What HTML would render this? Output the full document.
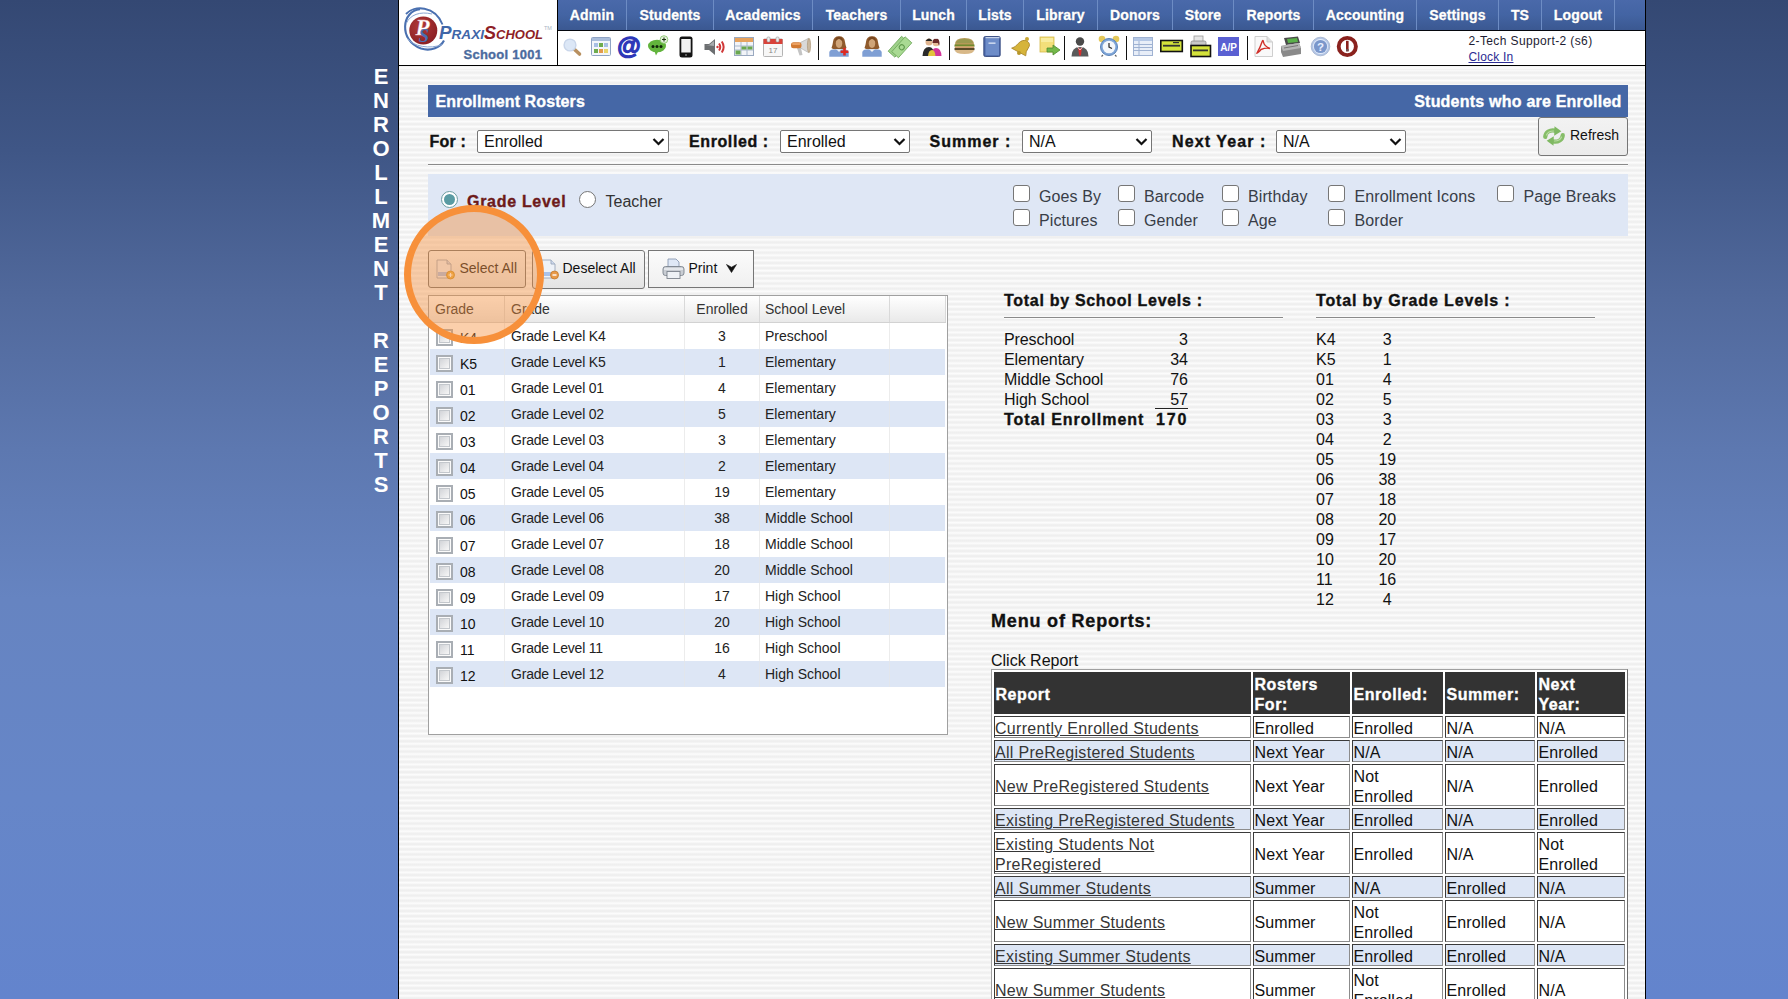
<!DOCTYPE html>
<html><head><meta charset="utf-8"><title>Enrollment Rosters</title>
<style>
html,body{margin:0;padding:0;}
body{width:1788px;height:999px;overflow:hidden;position:relative;font-family:"Liberation Sans",sans-serif;
 background:linear-gradient(to bottom,#344873 0%,#3f5686 15%,#51699c 30%,#5d78b0 45%,#6684c1 60%,#6686c8 80%,#6384cd 100%);}
.a{position:absolute;box-sizing:border-box;}
.t{position:absolute;white-space:nowrap;}
svg{position:absolute;overflow:visible;}
</style></head><body>

<div class="t" style="left:181px;width:400px;text-align:center;top:65px;font-size:22px;line-height:24px;font-weight:bold;color:#ffffff;letter-spacing:0px;">E</div>
<div class="t" style="left:181px;width:400px;text-align:center;top:89px;font-size:22px;line-height:24px;font-weight:bold;color:#ffffff;letter-spacing:0px;">N</div>
<div class="t" style="left:181px;width:400px;text-align:center;top:113px;font-size:22px;line-height:24px;font-weight:bold;color:#ffffff;letter-spacing:0px;">R</div>
<div class="t" style="left:181px;width:400px;text-align:center;top:137px;font-size:22px;line-height:24px;font-weight:bold;color:#ffffff;letter-spacing:0px;">O</div>
<div class="t" style="left:181px;width:400px;text-align:center;top:161px;font-size:22px;line-height:24px;font-weight:bold;color:#ffffff;letter-spacing:0px;">L</div>
<div class="t" style="left:181px;width:400px;text-align:center;top:185px;font-size:22px;line-height:24px;font-weight:bold;color:#ffffff;letter-spacing:0px;">L</div>
<div class="t" style="left:181px;width:400px;text-align:center;top:209px;font-size:22px;line-height:24px;font-weight:bold;color:#ffffff;letter-spacing:0px;">M</div>
<div class="t" style="left:181px;width:400px;text-align:center;top:233px;font-size:22px;line-height:24px;font-weight:bold;color:#ffffff;letter-spacing:0px;">E</div>
<div class="t" style="left:181px;width:400px;text-align:center;top:257px;font-size:22px;line-height:24px;font-weight:bold;color:#ffffff;letter-spacing:0px;">N</div>
<div class="t" style="left:181px;width:400px;text-align:center;top:281px;font-size:22px;line-height:24px;font-weight:bold;color:#ffffff;letter-spacing:0px;">T</div>
<div class="t" style="left:181px;width:400px;text-align:center;top:329px;font-size:22px;line-height:24px;font-weight:bold;color:#ffffff;letter-spacing:0px;">R</div>
<div class="t" style="left:181px;width:400px;text-align:center;top:353px;font-size:22px;line-height:24px;font-weight:bold;color:#ffffff;letter-spacing:0px;">E</div>
<div class="t" style="left:181px;width:400px;text-align:center;top:377px;font-size:22px;line-height:24px;font-weight:bold;color:#ffffff;letter-spacing:0px;">P</div>
<div class="t" style="left:181px;width:400px;text-align:center;top:401px;font-size:22px;line-height:24px;font-weight:bold;color:#ffffff;letter-spacing:0px;">O</div>
<div class="t" style="left:181px;width:400px;text-align:center;top:425px;font-size:22px;line-height:24px;font-weight:bold;color:#ffffff;letter-spacing:0px;">R</div>
<div class="t" style="left:181px;width:400px;text-align:center;top:449px;font-size:22px;line-height:24px;font-weight:bold;color:#ffffff;letter-spacing:0px;">T</div>
<div class="t" style="left:181px;width:400px;text-align:center;top:473px;font-size:22px;line-height:24px;font-weight:bold;color:#ffffff;letter-spacing:0px;">S</div>
<div class="a" style="left:398px;top:0px;width:1248px;height:999px;border-left:1px solid #000;border-right:1px solid #000;background:#fff;"></div>
<div class="a" style="left:399px;top:66px;width:1246px;height:933px;background:repeating-linear-gradient(to bottom,#fdfdfd 0px,#f6f6f6 1.0px,#efefef 2.0px,#efefef 3.14px,#f6f6f6 4.14px,#fdfdfd 5.142857px);background-position:0 4.157px;"></div>
<div class="a" style="left:399px;top:0px;width:1246px;height:65px;background:#fff;"></div>
<div class="a" style="left:399px;top:65px;width:1246px;height:1px;background:#000;"></div>
<div class="a" style="left:557px;top:0px;width:1px;height:65px;background:#000;"></div>
<div class="a" style="left:558px;top:0px;width:1087px;height:30px;background:linear-gradient(to bottom,#4a69aa 0%,#4364a3 50%,#3b5891 100%);"></div>
<div class="a" style="left:558px;top:30px;width:1087px;height:1px;background:#05070d;"></div>
<div class="t" style="left:392.0px;width:400px;text-align:center;top:6px;font-size:14px;line-height:18px;font-weight:bold;color:#ffffff;letter-spacing:0.15px;-webkit-text-stroke:0.35px #ffffff;text-shadow:0 0 1px rgba(0,0,0,.35);">Admin</div>
<div class="a" style="left:626px;top:0px;width:1px;height:30px;background:#6d8cc4;"></div>
<div class="t" style="left:470.0px;width:400px;text-align:center;top:6px;font-size:14px;line-height:18px;font-weight:bold;color:#ffffff;letter-spacing:0.15px;-webkit-text-stroke:0.35px #ffffff;text-shadow:0 0 1px rgba(0,0,0,.35);">Students</div>
<div class="a" style="left:713px;top:0px;width:1px;height:30px;background:#6d8cc4;"></div>
<div class="t" style="left:563.0px;width:400px;text-align:center;top:6px;font-size:14px;line-height:18px;font-weight:bold;color:#ffffff;letter-spacing:0.15px;-webkit-text-stroke:0.35px #ffffff;text-shadow:0 0 1px rgba(0,0,0,.35);">Academics</div>
<div class="a" style="left:812px;top:0px;width:1px;height:30px;background:#6d8cc4;"></div>
<div class="t" style="left:656.5px;width:400px;text-align:center;top:6px;font-size:14px;line-height:18px;font-weight:bold;color:#ffffff;letter-spacing:0.15px;-webkit-text-stroke:0.35px #ffffff;text-shadow:0 0 1px rgba(0,0,0,.35);">Teachers</div>
<div class="a" style="left:900px;top:0px;width:1px;height:30px;background:#6d8cc4;"></div>
<div class="t" style="left:733.5px;width:400px;text-align:center;top:6px;font-size:14px;line-height:18px;font-weight:bold;color:#ffffff;letter-spacing:0.15px;-webkit-text-stroke:0.35px #ffffff;text-shadow:0 0 1px rgba(0,0,0,.35);">Lunch</div>
<div class="a" style="left:966px;top:0px;width:1px;height:30px;background:#6d8cc4;"></div>
<div class="t" style="left:795.0px;width:400px;text-align:center;top:6px;font-size:14px;line-height:18px;font-weight:bold;color:#ffffff;letter-spacing:0.15px;-webkit-text-stroke:0.35px #ffffff;text-shadow:0 0 1px rgba(0,0,0,.35);">Lists</div>
<div class="a" style="left:1023px;top:0px;width:1px;height:30px;background:#6d8cc4;"></div>
<div class="t" style="left:860.5px;width:400px;text-align:center;top:6px;font-size:14px;line-height:18px;font-weight:bold;color:#ffffff;letter-spacing:0.15px;-webkit-text-stroke:0.35px #ffffff;text-shadow:0 0 1px rgba(0,0,0,.35);">Library</div>
<div class="a" style="left:1097px;top:0px;width:1px;height:30px;background:#6d8cc4;"></div>
<div class="t" style="left:935.0px;width:400px;text-align:center;top:6px;font-size:14px;line-height:18px;font-weight:bold;color:#ffffff;letter-spacing:0.15px;-webkit-text-stroke:0.35px #ffffff;text-shadow:0 0 1px rgba(0,0,0,.35);">Donors</div>
<div class="a" style="left:1172px;top:0px;width:1px;height:30px;background:#6d8cc4;"></div>
<div class="t" style="left:1003.0px;width:400px;text-align:center;top:6px;font-size:14px;line-height:18px;font-weight:bold;color:#ffffff;letter-spacing:0.15px;-webkit-text-stroke:0.35px #ffffff;text-shadow:0 0 1px rgba(0,0,0,.35);">Store</div>
<div class="a" style="left:1233px;top:0px;width:1px;height:30px;background:#6d8cc4;"></div>
<div class="t" style="left:1073.5px;width:400px;text-align:center;top:6px;font-size:14px;line-height:18px;font-weight:bold;color:#ffffff;letter-spacing:0.15px;-webkit-text-stroke:0.35px #ffffff;text-shadow:0 0 1px rgba(0,0,0,.35);">Reports</div>
<div class="a" style="left:1313px;top:0px;width:1px;height:30px;background:#6d8cc4;"></div>
<div class="t" style="left:1165.0px;width:400px;text-align:center;top:6px;font-size:14px;line-height:18px;font-weight:bold;color:#ffffff;letter-spacing:0.15px;-webkit-text-stroke:0.35px #ffffff;text-shadow:0 0 1px rgba(0,0,0,.35);">Accounting</div>
<div class="a" style="left:1416px;top:0px;width:1px;height:30px;background:#6d8cc4;"></div>
<div class="t" style="left:1257.5px;width:400px;text-align:center;top:6px;font-size:14px;line-height:18px;font-weight:bold;color:#ffffff;letter-spacing:0.15px;-webkit-text-stroke:0.35px #ffffff;text-shadow:0 0 1px rgba(0,0,0,.35);">Settings</div>
<div class="a" style="left:1498px;top:0px;width:1px;height:30px;background:#6d8cc4;"></div>
<div class="t" style="left:1320.0px;width:400px;text-align:center;top:6px;font-size:14px;line-height:18px;font-weight:bold;color:#ffffff;letter-spacing:0.15px;-webkit-text-stroke:0.35px #ffffff;text-shadow:0 0 1px rgba(0,0,0,.35);">TS</div>
<div class="a" style="left:1541px;top:0px;width:1px;height:30px;background:#6d8cc4;"></div>
<div class="t" style="left:1378.0px;width:400px;text-align:center;top:6px;font-size:14px;line-height:18px;font-weight:bold;color:#ffffff;letter-spacing:0.15px;-webkit-text-stroke:0.35px #ffffff;text-shadow:0 0 1px rgba(0,0,0,.35);">Logout</div>
<div class="a" style="left:1614px;top:0px;width:1px;height:30px;background:#6d8cc4;"></div>
<svg style="left:399px;top:0px" width="158" height="65" viewBox="0 0 158 65">
 <defs><radialGradient id="rg" cx="40%" cy="35%" r="70%"><stop offset="0" stop-color="#b03a3a"/><stop offset="1" stop-color="#8a1e22"/></radialGradient></defs>
 <path d="M21 9.3 C3 10.5, -1 40, 22 48.6 C32 51.5, 41.5 47.5, 45 40.5" fill="none" stroke="#4a70b0" stroke-width="2.1"/>
 <path d="M7 14 C15 5, 36 5.5, 43.5 24.5" fill="none" stroke="#4a70b0" stroke-width="1.9"/>
 <path d="M7.5 23 C11 15, 21 11, 33 14" fill="none" stroke="#8aa6d2" stroke-width="1"/>
 <path d="M8.5 38.5 C14 46.5, 31 49.5, 43.5 44.5" fill="none" stroke="#8aa6d2" stroke-width="1"/>
 <circle cx="24.3" cy="30.5" r="14" fill="url(#rg)"/>
 <text x="16.5" y="35" font-family="Liberation Serif" font-style="italic" font-weight="bold" font-size="23" fill="#ffffff" stroke="#e8b0b0" stroke-width="0.3">P</text>
 <text x="19.5" y="42" font-family="Liberation Serif" font-style="italic" font-weight="bold" font-size="19" fill="#4a6fb4">S</text>
 <text x="40" y="38.5" font-family="Liberation Sans" font-style="italic" font-weight="bold" fill="#3f66a8" textLength="45" lengthAdjust="spacingAndGlyphs"><tspan font-size="17.5">P</tspan><tspan font-size="12.6">RAXI</tspan></text>
 <text x="85" y="38.5" font-family="Liberation Sans" font-style="italic" font-weight="bold" fill="#8e1f26" textLength="59" lengthAdjust="spacingAndGlyphs"><tspan font-size="17.5">S</tspan><tspan font-size="12.6">CHOOL</tspan></text>
 <text x="145" y="29.5" font-family="Liberation Sans" font-size="5.5" fill="#aab4c4">TM</text>
</svg>
<div class="t" style="left:463.5px;top:47px;font-size:13px;line-height:16px;font-weight:bold;color:#4b6b9e;letter-spacing:0.25px;-webkit-text-stroke:0.35px #4b6b9e;">School 1001</div>
<svg style="left:562px;top:37px" width="20" height="19" viewBox="0 0 20 19"><path d="M11.5 11.5 L17.5 17" stroke="#b89060" stroke-width="3.6" stroke-linecap="round"/><circle cx="8" cy="8" r="6.6" fill="#c9d6ea"/><circle cx="8" cy="8" r="5.2" fill="#dce7f6"/></svg>
<svg style="left:591px;top:37px" width="20" height="19" viewBox="0 0 20 19"><rect x="0.5" y="0.5" width="19" height="18" rx="1" fill="#f3f6fb" stroke="#8fa3c4"/><rect x="1" y="1" width="18" height="3" fill="#a9bddb"/><rect x="3" y="6" width="4" height="4" fill="#a7bfe4"/><rect x="8" y="6" width="4" height="4" fill="#6eab4e"/><rect x="13" y="6" width="4" height="4" fill="#a7bfe4"/><rect x="3" y="12" width="4" height="4" fill="#6eab4e"/><rect x="8" y="12" width="4" height="4" fill="#e39a4e"/><rect x="13" y="12" width="4" height="4" fill="#e8d46a"/></svg>
<svg style="left:617px;top:35px" width="24" height="23" viewBox="0 0 24 23"><text x="12" y="18.5" text-anchor="middle" font-family="Liberation Sans" font-weight="bold" font-size="24" fill="#2d37b8" stroke="#2d37b8" stroke-width="1.3">@</text></svg>
<svg style="left:647px;top:35px" width="22" height="22" viewBox="0 0 22 22"><ellipse cx="10" cy="11" rx="9" ry="6.3" fill="#62b43c"/><path d="M7 15 L9 20.5 L12 15Z" fill="#62b43c"/><circle cx="6" cy="11.5" r="1.5" fill="#10240a"/><circle cx="10" cy="11.5" r="1.5" fill="#10240a"/><circle cx="14" cy="11.5" r="1.5" fill="#10240a"/><circle cx="17" cy="4.5" r="3.8" fill="#e4f2dc" stroke="#8cc870" stroke-width="0.9"/><path d="M17 2.5 V6.5 M15 4.5 H19" stroke="#1d3510" stroke-width="1.1"/></svg>
<svg style="left:679px;top:36px" width="14" height="22" viewBox="0 0 14 22"><rect x="0.5" y="0.5" width="13" height="21" rx="2.5" fill="#141414"/><rect x="2.3" y="3" width="9.4" height="13.5" fill="#f2f2f2"/><circle cx="7" cy="19" r="1" fill="#777"/></svg>
<svg style="left:704px;top:38px" width="23" height="18" viewBox="0 0 23 18"><path d="M0.5 6 H5 L11 1 V17 L5 12 H0.5 Z" fill="#6c6f71"/><path d="M1.5 7 H5 L10 3 V8 Z" fill="#a9acae"/><circle cx="13.5" cy="9" r="1.2" fill="#d03838"/><path d="M15 5.5 Q17.5 9 15 12.5" fill="none" stroke="#d03838" stroke-width="2"/><path d="M17.8 3.5 Q21.5 9 17.8 14.5" fill="none" stroke="#d03838" stroke-width="2"/></svg>
<svg style="left:734px;top:37px" width="20" height="19" viewBox="0 0 20 19"><rect x="0.5" y="0.5" width="19" height="18" fill="#f2f4f8" stroke="#9aa9c0"/><rect x="1" y="1" width="18" height="4" fill="#e7a35e"/><path d="M1 9 H19 M1 13 H19 M7 5 V18 M13 5 V18" stroke="#a9b8cc" stroke-width="1"/><rect x="7.5" y="9.5" width="5" height="3" fill="#6aa84f"/><rect x="1.5" y="13.5" width="5" height="4" fill="#6aa84f"/><rect x="13.5" y="9.5" width="5" height="3" fill="#6aa84f"/></svg>
<svg style="left:763px;top:36px" width="20" height="21" viewBox="0 0 20 21"><rect x="0.5" y="3" width="19" height="17.5" rx="1" fill="#f7f7f7" stroke="#b4b4b4"/><rect x="0.5" y="3" width="19" height="5" fill="#d8423a"/><rect x="4" y="1" width="3" height="5" rx="1" fill="#eee" stroke="#999" stroke-width="0.6"/><rect x="13" y="1" width="3" height="5" rx="1" fill="#eee" stroke="#999" stroke-width="0.6"/><text x="10" y="17" text-anchor="middle" font-family="Liberation Sans" font-size="8" fill="#888">17</text></svg>
<svg style="left:790px;top:37px" width="22" height="20" viewBox="0 0 22 20"><path d="M7 11 L9.5 18.5 L12.5 18 L11 11Z" fill="#c4c4c4"/><path d="M10.5 5.5 L18.5 1.3 L18.5 15.6 L10.5 11 Z" fill="#d9d9d9" stroke="#a8a8a8" stroke-width="0.6"/><rect x="1" y="5.3" width="10.5" height="6" rx="2.5" fill="#d27a32"/><rect x="2" y="6" width="8.5" height="2" rx="1" fill="#eba060"/><ellipse cx="19" cy="8.5" rx="1.6" ry="7.2" fill="#c9b8a0" stroke="#a89070" stroke-width="0.6"/></svg>
<div class="a" style="left:818px;top:36px;width:1.3px;height:24px;background:#111;"></div>
<div class="a" style="left:949px;top:36px;width:1.3px;height:24px;background:#111;"></div>
<div class="a" style="left:1064px;top:36px;width:1.3px;height:24px;background:#111;"></div>
<div class="a" style="left:1126px;top:36px;width:1.3px;height:24px;background:#111;"></div>
<div class="a" style="left:1247px;top:36px;width:1.3px;height:24px;background:#111;"></div>
<svg style="left:829px;top:36px" width="20" height="21" viewBox="0 0 20 21"><path d="M10 0.3 Q4.5 0.3 4 6 Q3.5 9.5 2.5 12 Q4.5 13.8 7.5 13 L12.5 13 Q15.5 13.8 17.5 12 Q16.5 9.5 16 6 Q15.5 0.3 10 0.3Z" fill="#8f5a2c"/><ellipse cx="10" cy="7.3" rx="3.2" ry="4.6" fill="#cfa478"/><path d="M10 0.8 Q6 1 6.3 5.5 Q8.5 2.8 10 3 Q11.5 2.8 13.7 5.5 Q14 1 10 0.8Z" fill="#7a4820"/><path d="M0.3 20.8 V16.5 Q0.5 13.6 4 13.4 L16 13.4 Q19.5 13.6 19.7 16.5 V20.8Z" fill="#7f9fd4"/><path d="M7.5 13.4 L10 16 L12.5 13.4Z" fill="#f4f4f4"/><path d="M15.5 11.8 V19.6 M11.6 15.7 H19.4" stroke="#dd2a22" stroke-width="2.6"/></svg>
<svg style="left:862px;top:36px" width="20" height="21" viewBox="0 0 20 21"><path d="M10 0.3 Q4.5 0.3 4 6 Q3.5 9.5 2.5 12 Q4.5 13.8 7.5 13 L12.5 13 Q15.5 13.8 17.5 12 Q16.5 9.5 16 6 Q15.5 0.3 10 0.3Z" fill="#8f5a2c"/><ellipse cx="10" cy="7.3" rx="3.2" ry="4.6" fill="#cfa478"/><path d="M10 0.8 Q6 1 6.3 5.5 Q8.5 2.8 10 3 Q11.5 2.8 13.7 5.5 Q14 1 10 0.8Z" fill="#7a4820"/><path d="M0.3 20.8 V16.5 Q0.5 13.6 4 13.4 L16 13.4 Q19.5 13.6 19.7 16.5 V20.8Z" fill="#7f9fd4"/><path d="M7.5 13.4 L10 16 L12.5 13.4Z" fill="#f4f4f4"/></svg>
<svg style="left:890px;top:37px" width="20" height="19" viewBox="0 0 20 19"><g transform="rotate(-48 10 10)"><rect x="-1" y="4" width="20" height="9" fill="#9ed08a" stroke="#6ea85a" stroke-width="0.8"/><rect x="1" y="7" width="20" height="9" fill="#a9da93" stroke="#6ea85a" stroke-width="0.8"/><circle cx="11" cy="11.5" r="2.5" fill="none" stroke="#5f9a4c"/></g></svg>
<svg style="left:922px;top:37px" width="20" height="19" viewBox="0 0 20 19"><circle cx="7" cy="5" r="3.5" fill="#e0b590"/><path d="M3.5 4 Q7 -1 10.5 4" fill="#222"/><path d="M0.5 19 Q1 10 7 10 Q12 10 12.5 19Z" fill="#2a2a2a"/><circle cx="14" cy="6" r="3.3" fill="#e6bc98"/><path d="M10.5 6 Q11 1 14 2 Q17.5 1 17.5 7 L17 9 L16 6Z" fill="#6a2a2a"/><path d="M9 19 Q9.5 11 14 11 Q19 11 19.5 19Z" fill="#d2359a"/><path d="M6 19 Q6.5 13 10 13 Q13 13 13.5 19Z" fill="#e1c33c"/></svg>
<svg style="left:954px;top:37px" width="21" height="18" viewBox="0 0 21 18"><path d="M1 8 Q0.5 1 10.5 1 Q20.5 1 20 8Z" fill="#b59a58"/><path d="M2 6 Q3 2 10.5 2 Q18 2 19 6Z" fill="#9a9a50"/><rect x="0.5" y="7.5" width="20" height="2.2" fill="#6f8a2e"/><rect x="1" y="9.5" width="19" height="1.3" fill="#e8a060"/><rect x="0.5" y="10.8" width="20" height="2.4" fill="#5a4a28"/><path d="M1 13 H20 Q20 17 10.5 17 Q1 17 1 13Z" fill="#d8b888"/></svg>
<svg style="left:983px;top:36px" width="18" height="21" viewBox="0 0 18 21"><rect x="0.8" y="0.5" width="16.4" height="20" rx="1.5" fill="#4a66a8" stroke="#34497e" stroke-width="0.9"/><rect x="2.5" y="2.3" width="13.5" height="17" fill="#6d8cc8"/><rect x="2.5" y="1" width="14" height="1.3" fill="#c8d4ea"/><rect x="5.5" y="6.5" width="7" height="1.3" fill="#dfe8f7"/></svg>
<svg style="left:1010px;top:36px" width="22" height="21" viewBox="0 0 22 21"><path d="M3 16 Q6 14 7 9 Q9 3 14 3 Q19 4 18 9 Q17 13 19 17 Z" fill="#d6b43a" stroke="#a8862a" stroke-width="0.8" transform="rotate(25 11 11)"/><circle cx="17" cy="3" r="2" fill="#c9a733"/><circle cx="9" cy="17" r="2" fill="#b8962a"/></svg>
<svg style="left:1039px;top:36px" width="22" height="21" viewBox="0 0 22 21"><rect x="1" y="1" width="14" height="15" fill="#f3df7a" stroke="#d4b94a" stroke-width="0.8"/><rect x="2" y="2" width="12" height="4" fill="#f8ec9f"/><path d="M8 12 H14 V9 L21 14 L14 19 V16 H8Z" fill="#74b84a" stroke="#4f8a2e" stroke-width="0.8"/></svg>
<svg style="left:1071px;top:36px" width="18" height="21" viewBox="0 0 18 21"><circle cx="9" cy="5.5" r="4.2" fill="#4a4a4a"/><path d="M0.5 20.5 Q0.5 11 9 11 Q17.5 11 17.5 20.5Z" fill="#5a5a5a"/><path d="M7 11 L9 13 L11 11 L10 19 L9 20 L8 19Z" fill="#d83030"/><path d="M6.5 11 L9 14 L11.5 11" fill="none" stroke="#eee" stroke-width="0.8"/></svg>
<svg style="left:1098px;top:35px" width="22" height="22" viewBox="0 0 22 22"><circle cx="4" cy="4" r="3.3" fill="#e4c85a"/><circle cx="18" cy="4" r="3.3" fill="#e4c85a"/><circle cx="11" cy="12" r="8.5" fill="#7fa6d8" stroke="#5a82b8" stroke-width="1"/><circle cx="11" cy="12" r="6.3" fill="#f4f7fb"/><path d="M11 8 V12 L14 13.5" stroke="#333" stroke-width="1.3" fill="none"/><path d="M5 20 L3.5 21.5 M17 20 L18.5 21.5" stroke="#666" stroke-width="1.2"/></svg>
<svg style="left:1133px;top:37px" width="20" height="19" viewBox="0 0 20 19"><rect x="0.5" y="0.5" width="19" height="18" fill="#e8eef8" stroke="#9fb2d2"/><rect x="1" y="1" width="18" height="3" fill="#b5c8e6"/><path d="M1 7.5 H19 M1 10.5 H19 M1 13.5 H19 M6 4 V18" stroke="#9fb2d2" stroke-width="1"/></svg>
<svg style="left:1160px;top:39px" width="23" height="14" viewBox="0 0 23 14"><rect x="0.8" y="1.5" width="21.5" height="11" fill="#d4e23a" stroke="#111" stroke-width="1.6"/><rect x="3" y="5.8" width="17" height="1.8" fill="#333"/><rect x="13" y="3" width="6" height="1.2" fill="#333"/></svg>
<svg style="left:1190px;top:35px" width="21" height="22" viewBox="0 0 21 22"><rect x="4" y="1" width="9" height="7" fill="#e6e6e6" stroke="#999" stroke-width="0.8"/><rect x="1" y="6" width="15" height="8" rx="1.5" fill="#c8c8c8" stroke="#888" stroke-width="0.8"/><rect x="1" y="10.5" width="19.5" height="11" fill="#d4e23a" stroke="#111" stroke-width="1.6"/><rect x="3" y="14.5" width="15" height="1.8" fill="#333"/></svg>
<svg style="left:1218px;top:37px" width="21" height="19" viewBox="0 0 21 19"><rect x="0" y="0" width="21" height="19" fill="#5a60d2"/><text x="10.5" y="13.5" text-anchor="middle" font-family="Liberation Sans" font-weight="bold" font-size="10" fill="#fff">A/P</text></svg>
<svg style="left:1253px;top:36px" width="21" height="21" viewBox="0 0 21 21"><path d="M2 0.5 H14 L19.5 6 V20.5 H2Z" fill="#f9f9f9" stroke="#c9c9c9" stroke-width="0.9"/><path d="M14 0.5 V6 H19.5" fill="#e0e0e0" stroke="#c9c9c9" stroke-width="0.9"/><path d="M4 17 Q7 12 9 6 Q10 3 10.5 6 Q11 10 17 12.5 Q13 11.5 8 13.5 Q5 17 4 17Z" fill="none" stroke="#d0302a" stroke-width="1.4"/></svg>
<svg style="left:1280px;top:36px" width="22" height="21" viewBox="0 0 22 21"><path d="M4 2 L18 0.5 L20 7 L6 9Z" fill="#4a4a4a"/><path d="M7 3 L17 2 L18 6 L8 7Z" fill="#5ab04a"/><path d="M1 10 L19 7 L21 12 L21 18 L3 21 L1 16Z" fill="#8a8a8a"/><path d="M1 10 L19 7 L21 12 L3 15Z" fill="#b5b5b5"/><path d="M4 12 L18 9.5" stroke="#666" stroke-width="0.8"/></svg>
<svg style="left:1310px;top:36px" width="21" height="21" viewBox="0 0 21 21"><circle cx="10.5" cy="10.5" r="9.3" fill="#b4c6e6" stroke="#9fb0cc" stroke-width="0.8"/><circle cx="10.5" cy="10.5" r="7.4" fill="#e6eefa"/><circle cx="10.5" cy="10.5" r="6.6" fill="#7b97cb"/><text x="10.5" y="15" text-anchor="middle" font-family="Liberation Sans" font-weight="bold" font-size="11.5" fill="#e8f0ff">?</text></svg>
<svg style="left:1336px;top:36px" width="22" height="22" viewBox="0 0 22 22"><circle cx="11.3" cy="10.5" r="8.6" fill="#fff" stroke="#8a221e" stroke-width="3.9"/><rect x="10" y="4.8" width="2.6" height="10.5" fill="#8a221e"/><rect x="10" y="13" width="2.6" height="2.3" fill="#6a5050"/></svg>
<div class="t" style="left:1468.5px;top:34px;font-size:12px;line-height:14px;font-weight:normal;color:#1d1d33;letter-spacing:0.38px;">2-Tech Support-2 (s6)</div>
<div class="t" style="left:1468.5px;top:50px;font-size:12px;line-height:14px;font-weight:normal;color:#2b2b92;letter-spacing:0.2px;text-decoration:underline;">Clock In</div>
<div class="a" style="left:428px;top:85px;width:1200px;height:32px;background:#4567a6;"></div>
<div class="t" style="left:435.5px;top:92px;font-size:16px;line-height:20px;font-weight:bold;color:#ffffff;letter-spacing:0.1px;-webkit-text-stroke:0.35px #ffffff;">Enrollment Rosters</div>
<div class="t" style="left:1221.5px;width:400px;text-align:right;top:92px;font-size:16px;line-height:20px;font-weight:bold;color:#ffffff;letter-spacing:0.22px;-webkit-text-stroke:0.35px #ffffff;">Students who are Enrolled</div>
<div class="t" style="left:429.5px;top:132px;font-size:16px;line-height:20px;font-weight:bold;color:#111;letter-spacing:0.2px;-webkit-text-stroke:0.35px #111;">For :</div>
<div class="a" style="left:477px;top:130px;width:192px;height:23px;background:#fff;border:1px solid #767676;border-radius:2px;"></div>
<div class="t" style="left:484px;top:132px;font-size:16px;line-height:20px;font-weight:normal;color:#111;letter-spacing:0px;">Enrolled</div>
<svg style="left:652px;top:137px" width="13" height="10" viewBox="0 0 13 10"><path d="M1.5 2 L6.5 7 L11.5 2" fill="none" stroke="#111" stroke-width="2.2"/></svg>
<div class="t" style="left:689px;top:132px;font-size:16px;line-height:20px;font-weight:bold;color:#111;letter-spacing:0.6px;-webkit-text-stroke:0.35px #111;">Enrolled :</div>
<div class="a" style="left:780px;top:130px;width:130px;height:23px;background:#fff;border:1px solid #767676;border-radius:2px;"></div>
<div class="t" style="left:787px;top:132px;font-size:16px;line-height:20px;font-weight:normal;color:#111;letter-spacing:0px;">Enrolled</div>
<svg style="left:893px;top:137px" width="13" height="10" viewBox="0 0 13 10"><path d="M1.5 2 L6.5 7 L11.5 2" fill="none" stroke="#111" stroke-width="2.2"/></svg>
<div class="t" style="left:929.5px;top:132px;font-size:16px;line-height:20px;font-weight:bold;color:#111;letter-spacing:1.0px;-webkit-text-stroke:0.35px #111;">Summer :</div>
<div class="a" style="left:1022px;top:130px;width:130px;height:23px;background:#fff;border:1px solid #767676;border-radius:2px;"></div>
<div class="t" style="left:1029px;top:132px;font-size:16px;line-height:20px;font-weight:normal;color:#111;letter-spacing:0px;">N/A</div>
<svg style="left:1135px;top:137px" width="13" height="10" viewBox="0 0 13 10"><path d="M1.5 2 L6.5 7 L11.5 2" fill="none" stroke="#111" stroke-width="2.2"/></svg>
<div class="t" style="left:1172px;top:132px;font-size:16px;line-height:20px;font-weight:bold;color:#111;letter-spacing:1.1px;-webkit-text-stroke:0.35px #111;">Next Year :</div>
<div class="a" style="left:1276px;top:130px;width:130px;height:23px;background:#fff;border:1px solid #767676;border-radius:2px;"></div>
<div class="t" style="left:1283px;top:132px;font-size:16px;line-height:20px;font-weight:normal;color:#111;letter-spacing:0px;">N/A</div>
<svg style="left:1389px;top:137px" width="13" height="10" viewBox="0 0 13 10"><path d="M1.5 2 L6.5 7 L11.5 2" fill="none" stroke="#111" stroke-width="2.2"/></svg>
<div class="a" style="left:1538px;top:117px;width:90px;height:39px;background:linear-gradient(#f2f2f2,#ebebeb);border:1px solid #767676;border-radius:3px;"></div>
<svg style="left:1543px;top:126px" width="22" height="20" viewBox="0 0 22 20">
<path d="M2.2 11 C2.5 6 7 3.6 12 4.6" fill="none" stroke="#86bd68" stroke-width="4.2" stroke-linecap="round"/>
<path d="M11.5 0.3 L18.3 5.2 L11.2 9.8Z" fill="#7fb862"/>
<path d="M19.8 9 C19.5 14 15 16.4 10 15.4" fill="none" stroke="#86bd68" stroke-width="4.2" stroke-linecap="round"/>
<path d="M10.5 19.7 L3.7 14.8 L10.8 10.2Z" fill="#7fb862"/>
<path d="M3.5 9 C4.5 6.5 7 5 10.5 5" fill="none" stroke="#b8dca2" stroke-width="1.2" stroke-linecap="round"/>
<path d="M18.5 11 C17.5 13.5 15 15 11.5 15" fill="none" stroke="#b8dca2" stroke-width="1.2" stroke-linecap="round"/>
</svg>
<div class="t" style="left:1570px;top:127px;font-size:14px;line-height:16px;font-weight:normal;color:#111;letter-spacing:0px;">Refresh</div>
<div class="a" style="left:428px;top:164px;width:1200px;height:1px;background:#8a8a8a;"></div>
<div class="a" style="left:428px;top:165px;width:1200px;height:1px;background:#fafafa;"></div>
<div class="a" style="left:428px;top:174px;width:1200px;height:62px;background:#dfe7f5;"></div>
<div class="a" style="left:441px;top:191px;width:17px;height:17px;border-radius:50%;border:1px solid #6c9ca0;background:#fff;"></div>
<div class="a" style="left:444px;top:194px;width:11px;height:11px;border-radius:50%;background:#5a9ba3;"></div>
<div class="t" style="left:467px;top:192px;font-size:16px;line-height:20px;font-weight:bold;color:#6d1a1a;letter-spacing:0.7px;-webkit-text-stroke:0.35px #6d1a1a;">Grade Level</div>
<div class="a" style="left:579px;top:191px;width:17px;height:17px;border-radius:50%;border:1px solid #767676;background:#fff;"></div>
<div class="t" style="left:605.5px;top:192px;font-size:16px;line-height:20px;font-weight:normal;color:#333;letter-spacing:0px;">Teacher</div>
<div class="a" style="left:1013px;top:185px;width:17px;height:17px;border-radius:3px;border:1px solid #767676;background:#fff;"></div>
<div class="t" style="left:1039px;top:187px;font-size:16px;line-height:20px;font-weight:normal;color:#383d47;letter-spacing:0.1px;">Goes By</div>
<div class="a" style="left:1013px;top:209px;width:17px;height:17px;border-radius:3px;border:1px solid #767676;background:#fff;"></div>
<div class="t" style="left:1039px;top:211px;font-size:16px;line-height:20px;font-weight:normal;color:#383d47;letter-spacing:0.1px;">Pictures</div>
<div class="a" style="left:1118px;top:185px;width:17px;height:17px;border-radius:3px;border:1px solid #767676;background:#fff;"></div>
<div class="t" style="left:1144px;top:187px;font-size:16px;line-height:20px;font-weight:normal;color:#383d47;letter-spacing:0.1px;">Barcode</div>
<div class="a" style="left:1118px;top:209px;width:17px;height:17px;border-radius:3px;border:1px solid #767676;background:#fff;"></div>
<div class="t" style="left:1144px;top:211px;font-size:16px;line-height:20px;font-weight:normal;color:#383d47;letter-spacing:0.1px;">Gender</div>
<div class="a" style="left:1222px;top:185px;width:17px;height:17px;border-radius:3px;border:1px solid #767676;background:#fff;"></div>
<div class="t" style="left:1248px;top:187px;font-size:16px;line-height:20px;font-weight:normal;color:#383d47;letter-spacing:0.1px;">Birthday</div>
<div class="a" style="left:1222px;top:209px;width:17px;height:17px;border-radius:3px;border:1px solid #767676;background:#fff;"></div>
<div class="t" style="left:1248px;top:211px;font-size:16px;line-height:20px;font-weight:normal;color:#383d47;letter-spacing:0.1px;">Age</div>
<div class="a" style="left:1328px;top:185px;width:17px;height:17px;border-radius:3px;border:1px solid #767676;background:#fff;"></div>
<div class="t" style="left:1354.5px;top:187px;font-size:16px;line-height:20px;font-weight:normal;color:#383d47;letter-spacing:0.1px;">Enrollment Icons</div>
<div class="a" style="left:1328px;top:209px;width:17px;height:17px;border-radius:3px;border:1px solid #767676;background:#fff;"></div>
<div class="t" style="left:1354.5px;top:211px;font-size:16px;line-height:20px;font-weight:normal;color:#383d47;letter-spacing:0.1px;">Border</div>
<div class="a" style="left:1497px;top:185px;width:17px;height:17px;border-radius:3px;border:1px solid #767676;background:#fff;"></div>
<div class="t" style="left:1523.5px;top:187px;font-size:16px;line-height:20px;font-weight:normal;color:#383d47;letter-spacing:0.1px;">Page Breaks</div>
<div class="a" style="left:428px;top:250px;width:98px;height:38px;background:linear-gradient(#f6f6f6,#e4e4e4);border:1px solid #767676;border-radius:3px;"></div>
<svg style="left:436px;top:259px" width="20" height="21" viewBox="0 0 20 21"><path d="M1 1 H11 L15 5 V19 H1Z" fill="#eef2f8" stroke="#9aa7bb" stroke-width="0.9"/><path d="M11 1 V5 H15" fill="#d0dbee" stroke="#9aa7bb" stroke-width="0.9"/><rect x="2" y="13" width="12" height="4" fill="#a9c2ea"/><circle cx="14.5" cy="16" r="4" fill="#e8b24a" stroke="#c48a2a" stroke-width="0.8"/><path d="M14.5 14 V18 M12.5 16 H16.5" stroke="#fff" stroke-width="1.2"/></svg>
<div class="t" style="left:459.5px;top:260px;font-size:14px;line-height:16px;font-weight:normal;color:#222;letter-spacing:0px;">Select All</div>
<div class="a" style="left:532px;top:250px;width:113px;height:39px;background:linear-gradient(#f6f6f6,#e4e4e4);border:1px solid #767676;border-radius:3px;"></div>
<svg style="left:540px;top:259px" width="20" height="21" viewBox="0 0 20 21"><path d="M1 1 H11 L15 5 V19 H1Z" fill="#eef2f8" stroke="#9aa7bb" stroke-width="0.9"/><path d="M11 1 V5 H15" fill="#d0dbee" stroke="#9aa7bb" stroke-width="0.9"/><rect x="2" y="13" width="12" height="4" fill="#a9c2ea"/><circle cx="14.5" cy="16" r="4" fill="#e89a4a" stroke="#c47a2a" stroke-width="0.8"/><path d="M12.5 16 H16.5" stroke="#fff" stroke-width="1.4"/></svg>
<div class="t" style="left:562.5px;top:260px;font-size:14px;line-height:16px;font-weight:normal;color:#111;letter-spacing:0px;">Deselect All</div>
<div class="a" style="left:648px;top:250px;width:106px;height:38px;background:linear-gradient(#fbfbfb,#f0f0f0);border:1px solid #767676;"></div>
<svg style="left:662px;top:258px" width="23" height="22" viewBox="0 0 23 22">
<path d="M6 1 H14 L17 4 V9 H6Z" fill="#dfe8f6" stroke="#8b9ab2" stroke-width="0.9"/>
<rect x="1" y="8.5" width="21" height="9" rx="2.5" fill="#c9cdd3" stroke="#7c838d" stroke-width="0.9"/>
<rect x="5" y="13.5" width="13" height="7" fill="#eef1f5" stroke="#7c838d" stroke-width="0.9"/>
<rect x="2" y="10" width="19" height="2" fill="#e4e7eb"/>
</svg>
<div class="t" style="left:688.5px;top:260px;font-size:14px;line-height:16px;font-weight:normal;color:#111;letter-spacing:0px;">Print</div>
<svg style="left:726px;top:263px" width="11" height="10" viewBox="0 0 11 10"><path d="M0.5 1.5 L5.5 9.5 L10.5 1.5 L5.5 4.2Z" fill="#111" stroke="#111" stroke-width="0.6" stroke-linejoin="round"/></svg>
<div class="a" style="left:428px;top:295px;width:520px;height:440px;background:#fff;border:1px solid #a0a0a0;"></div>
<div class="a" style="left:429px;top:296px;width:517px;height:27px;background:linear-gradient(#ffffff,#e9e9e9);border-bottom:1px solid #d2d2d2;"></div>
<div class="a" style="left:504px;top:296px;width:1px;height:26px;background:#d9d9d9;"></div>
<div class="a" style="left:684px;top:296px;width:1px;height:26px;background:#d9d9d9;"></div>
<div class="a" style="left:759px;top:296px;width:1px;height:26px;background:#d9d9d9;"></div>
<div class="a" style="left:889px;top:296px;width:1px;height:26px;background:#d9d9d9;"></div>
<div class="a" style="left:945px;top:296px;width:1px;height:26px;background:#d9d9d9;"></div>
<div class="t" style="left:435px;top:301px;font-size:14px;line-height:16px;font-weight:normal;color:#333;letter-spacing:0px;">Grade</div>
<div class="t" style="left:511px;top:301px;font-size:14px;line-height:16px;font-weight:normal;color:#333;letter-spacing:0px;">Grade</div>
<div class="t" style="left:522px;width:400px;text-align:center;top:301px;font-size:14px;line-height:16px;font-weight:normal;color:#333;letter-spacing:0px;">Enrolled</div>
<div class="t" style="left:765px;top:301px;font-size:14px;line-height:16px;font-weight:normal;color:#333;letter-spacing:0px;">School Level</div>
<div class="a" style="left:430px;top:323px;width:515px;height:26px;background:#ffffff;"></div>
<div class="a" style="left:504px;top:323px;width:1px;height:26px;background:#ececec;"></div>
<div class="a" style="left:684px;top:323px;width:1px;height:26px;background:#ececec;"></div>
<div class="a" style="left:759px;top:323px;width:1px;height:26px;background:#ececec;"></div>
<div class="a" style="left:889px;top:323px;width:1px;height:26px;background:#ececec;"></div>
<div class="a" style="left:436px;top:329px;width:17px;height:17px;border:2px solid #a9aeb4;background:#fbfbfb;"><div class="a" style="left:1px;top:1px;width:11px;height:11px;border:1px solid #c3c7cc;background:linear-gradient(135deg,#d2d4d8,#f7f7f7);"></div></div>
<div class="t" style="left:460px;top:330px;font-size:14px;line-height:16px;font-weight:normal;color:#111;letter-spacing:0px;">K4</div>
<div class="t" style="left:511px;top:328px;font-size:14px;line-height:16px;font-weight:normal;color:#222;letter-spacing:-0.2px;">Grade Level K4</div>
<div class="t" style="left:522px;width:400px;text-align:center;top:328px;font-size:14px;line-height:16px;font-weight:normal;color:#222;letter-spacing:0px;">3</div>
<div class="t" style="left:765px;top:328px;font-size:14px;line-height:16px;font-weight:normal;color:#222;letter-spacing:0px;">Preschool</div>
<div class="a" style="left:430px;top:349px;width:515px;height:26px;background:#dde6f5;"></div>
<div class="a" style="left:504px;top:349px;width:1px;height:26px;background:#e2e6ec;"></div>
<div class="a" style="left:684px;top:349px;width:1px;height:26px;background:#e2e6ec;"></div>
<div class="a" style="left:759px;top:349px;width:1px;height:26px;background:#e2e6ec;"></div>
<div class="a" style="left:889px;top:349px;width:1px;height:26px;background:#e2e6ec;"></div>
<div class="a" style="left:436px;top:355px;width:17px;height:17px;border:2px solid #a9aeb4;background:#fbfbfb;"><div class="a" style="left:1px;top:1px;width:11px;height:11px;border:1px solid #c3c7cc;background:linear-gradient(135deg,#d2d4d8,#f7f7f7);"></div></div>
<div class="t" style="left:460px;top:356px;font-size:14px;line-height:16px;font-weight:normal;color:#111;letter-spacing:0px;">K5</div>
<div class="t" style="left:511px;top:354px;font-size:14px;line-height:16px;font-weight:normal;color:#222;letter-spacing:-0.2px;">Grade Level K5</div>
<div class="t" style="left:522px;width:400px;text-align:center;top:354px;font-size:14px;line-height:16px;font-weight:normal;color:#222;letter-spacing:0px;">1</div>
<div class="t" style="left:765px;top:354px;font-size:14px;line-height:16px;font-weight:normal;color:#222;letter-spacing:0px;">Elementary</div>
<div class="a" style="left:430px;top:375px;width:515px;height:26px;background:#ffffff;"></div>
<div class="a" style="left:504px;top:375px;width:1px;height:26px;background:#ececec;"></div>
<div class="a" style="left:684px;top:375px;width:1px;height:26px;background:#ececec;"></div>
<div class="a" style="left:759px;top:375px;width:1px;height:26px;background:#ececec;"></div>
<div class="a" style="left:889px;top:375px;width:1px;height:26px;background:#ececec;"></div>
<div class="a" style="left:436px;top:381px;width:17px;height:17px;border:2px solid #a9aeb4;background:#fbfbfb;"><div class="a" style="left:1px;top:1px;width:11px;height:11px;border:1px solid #c3c7cc;background:linear-gradient(135deg,#d2d4d8,#f7f7f7);"></div></div>
<div class="t" style="left:460px;top:382px;font-size:14px;line-height:16px;font-weight:normal;color:#111;letter-spacing:0px;">01</div>
<div class="t" style="left:511px;top:380px;font-size:14px;line-height:16px;font-weight:normal;color:#222;letter-spacing:-0.2px;">Grade Level 01</div>
<div class="t" style="left:522px;width:400px;text-align:center;top:380px;font-size:14px;line-height:16px;font-weight:normal;color:#222;letter-spacing:0px;">4</div>
<div class="t" style="left:765px;top:380px;font-size:14px;line-height:16px;font-weight:normal;color:#222;letter-spacing:0px;">Elementary</div>
<div class="a" style="left:430px;top:401px;width:515px;height:26px;background:#dde6f5;"></div>
<div class="a" style="left:504px;top:401px;width:1px;height:26px;background:#e2e6ec;"></div>
<div class="a" style="left:684px;top:401px;width:1px;height:26px;background:#e2e6ec;"></div>
<div class="a" style="left:759px;top:401px;width:1px;height:26px;background:#e2e6ec;"></div>
<div class="a" style="left:889px;top:401px;width:1px;height:26px;background:#e2e6ec;"></div>
<div class="a" style="left:436px;top:407px;width:17px;height:17px;border:2px solid #a9aeb4;background:#fbfbfb;"><div class="a" style="left:1px;top:1px;width:11px;height:11px;border:1px solid #c3c7cc;background:linear-gradient(135deg,#d2d4d8,#f7f7f7);"></div></div>
<div class="t" style="left:460px;top:408px;font-size:14px;line-height:16px;font-weight:normal;color:#111;letter-spacing:0px;">02</div>
<div class="t" style="left:511px;top:406px;font-size:14px;line-height:16px;font-weight:normal;color:#222;letter-spacing:-0.2px;">Grade Level 02</div>
<div class="t" style="left:522px;width:400px;text-align:center;top:406px;font-size:14px;line-height:16px;font-weight:normal;color:#222;letter-spacing:0px;">5</div>
<div class="t" style="left:765px;top:406px;font-size:14px;line-height:16px;font-weight:normal;color:#222;letter-spacing:0px;">Elementary</div>
<div class="a" style="left:430px;top:427px;width:515px;height:26px;background:#ffffff;"></div>
<div class="a" style="left:504px;top:427px;width:1px;height:26px;background:#ececec;"></div>
<div class="a" style="left:684px;top:427px;width:1px;height:26px;background:#ececec;"></div>
<div class="a" style="left:759px;top:427px;width:1px;height:26px;background:#ececec;"></div>
<div class="a" style="left:889px;top:427px;width:1px;height:26px;background:#ececec;"></div>
<div class="a" style="left:436px;top:433px;width:17px;height:17px;border:2px solid #a9aeb4;background:#fbfbfb;"><div class="a" style="left:1px;top:1px;width:11px;height:11px;border:1px solid #c3c7cc;background:linear-gradient(135deg,#d2d4d8,#f7f7f7);"></div></div>
<div class="t" style="left:460px;top:434px;font-size:14px;line-height:16px;font-weight:normal;color:#111;letter-spacing:0px;">03</div>
<div class="t" style="left:511px;top:432px;font-size:14px;line-height:16px;font-weight:normal;color:#222;letter-spacing:-0.2px;">Grade Level 03</div>
<div class="t" style="left:522px;width:400px;text-align:center;top:432px;font-size:14px;line-height:16px;font-weight:normal;color:#222;letter-spacing:0px;">3</div>
<div class="t" style="left:765px;top:432px;font-size:14px;line-height:16px;font-weight:normal;color:#222;letter-spacing:0px;">Elementary</div>
<div class="a" style="left:430px;top:453px;width:515px;height:26px;background:#dde6f5;"></div>
<div class="a" style="left:504px;top:453px;width:1px;height:26px;background:#e2e6ec;"></div>
<div class="a" style="left:684px;top:453px;width:1px;height:26px;background:#e2e6ec;"></div>
<div class="a" style="left:759px;top:453px;width:1px;height:26px;background:#e2e6ec;"></div>
<div class="a" style="left:889px;top:453px;width:1px;height:26px;background:#e2e6ec;"></div>
<div class="a" style="left:436px;top:459px;width:17px;height:17px;border:2px solid #a9aeb4;background:#fbfbfb;"><div class="a" style="left:1px;top:1px;width:11px;height:11px;border:1px solid #c3c7cc;background:linear-gradient(135deg,#d2d4d8,#f7f7f7);"></div></div>
<div class="t" style="left:460px;top:460px;font-size:14px;line-height:16px;font-weight:normal;color:#111;letter-spacing:0px;">04</div>
<div class="t" style="left:511px;top:458px;font-size:14px;line-height:16px;font-weight:normal;color:#222;letter-spacing:-0.2px;">Grade Level 04</div>
<div class="t" style="left:522px;width:400px;text-align:center;top:458px;font-size:14px;line-height:16px;font-weight:normal;color:#222;letter-spacing:0px;">2</div>
<div class="t" style="left:765px;top:458px;font-size:14px;line-height:16px;font-weight:normal;color:#222;letter-spacing:0px;">Elementary</div>
<div class="a" style="left:430px;top:479px;width:515px;height:26px;background:#ffffff;"></div>
<div class="a" style="left:504px;top:479px;width:1px;height:26px;background:#ececec;"></div>
<div class="a" style="left:684px;top:479px;width:1px;height:26px;background:#ececec;"></div>
<div class="a" style="left:759px;top:479px;width:1px;height:26px;background:#ececec;"></div>
<div class="a" style="left:889px;top:479px;width:1px;height:26px;background:#ececec;"></div>
<div class="a" style="left:436px;top:485px;width:17px;height:17px;border:2px solid #a9aeb4;background:#fbfbfb;"><div class="a" style="left:1px;top:1px;width:11px;height:11px;border:1px solid #c3c7cc;background:linear-gradient(135deg,#d2d4d8,#f7f7f7);"></div></div>
<div class="t" style="left:460px;top:486px;font-size:14px;line-height:16px;font-weight:normal;color:#111;letter-spacing:0px;">05</div>
<div class="t" style="left:511px;top:484px;font-size:14px;line-height:16px;font-weight:normal;color:#222;letter-spacing:-0.2px;">Grade Level 05</div>
<div class="t" style="left:522px;width:400px;text-align:center;top:484px;font-size:14px;line-height:16px;font-weight:normal;color:#222;letter-spacing:0px;">19</div>
<div class="t" style="left:765px;top:484px;font-size:14px;line-height:16px;font-weight:normal;color:#222;letter-spacing:0px;">Elementary</div>
<div class="a" style="left:430px;top:505px;width:515px;height:26px;background:#dde6f5;"></div>
<div class="a" style="left:504px;top:505px;width:1px;height:26px;background:#e2e6ec;"></div>
<div class="a" style="left:684px;top:505px;width:1px;height:26px;background:#e2e6ec;"></div>
<div class="a" style="left:759px;top:505px;width:1px;height:26px;background:#e2e6ec;"></div>
<div class="a" style="left:889px;top:505px;width:1px;height:26px;background:#e2e6ec;"></div>
<div class="a" style="left:436px;top:511px;width:17px;height:17px;border:2px solid #a9aeb4;background:#fbfbfb;"><div class="a" style="left:1px;top:1px;width:11px;height:11px;border:1px solid #c3c7cc;background:linear-gradient(135deg,#d2d4d8,#f7f7f7);"></div></div>
<div class="t" style="left:460px;top:512px;font-size:14px;line-height:16px;font-weight:normal;color:#111;letter-spacing:0px;">06</div>
<div class="t" style="left:511px;top:510px;font-size:14px;line-height:16px;font-weight:normal;color:#222;letter-spacing:-0.2px;">Grade Level 06</div>
<div class="t" style="left:522px;width:400px;text-align:center;top:510px;font-size:14px;line-height:16px;font-weight:normal;color:#222;letter-spacing:0px;">38</div>
<div class="t" style="left:765px;top:510px;font-size:14px;line-height:16px;font-weight:normal;color:#222;letter-spacing:0px;">Middle School</div>
<div class="a" style="left:430px;top:531px;width:515px;height:26px;background:#ffffff;"></div>
<div class="a" style="left:504px;top:531px;width:1px;height:26px;background:#ececec;"></div>
<div class="a" style="left:684px;top:531px;width:1px;height:26px;background:#ececec;"></div>
<div class="a" style="left:759px;top:531px;width:1px;height:26px;background:#ececec;"></div>
<div class="a" style="left:889px;top:531px;width:1px;height:26px;background:#ececec;"></div>
<div class="a" style="left:436px;top:537px;width:17px;height:17px;border:2px solid #a9aeb4;background:#fbfbfb;"><div class="a" style="left:1px;top:1px;width:11px;height:11px;border:1px solid #c3c7cc;background:linear-gradient(135deg,#d2d4d8,#f7f7f7);"></div></div>
<div class="t" style="left:460px;top:538px;font-size:14px;line-height:16px;font-weight:normal;color:#111;letter-spacing:0px;">07</div>
<div class="t" style="left:511px;top:536px;font-size:14px;line-height:16px;font-weight:normal;color:#222;letter-spacing:-0.2px;">Grade Level 07</div>
<div class="t" style="left:522px;width:400px;text-align:center;top:536px;font-size:14px;line-height:16px;font-weight:normal;color:#222;letter-spacing:0px;">18</div>
<div class="t" style="left:765px;top:536px;font-size:14px;line-height:16px;font-weight:normal;color:#222;letter-spacing:0px;">Middle School</div>
<div class="a" style="left:430px;top:557px;width:515px;height:26px;background:#dde6f5;"></div>
<div class="a" style="left:504px;top:557px;width:1px;height:26px;background:#e2e6ec;"></div>
<div class="a" style="left:684px;top:557px;width:1px;height:26px;background:#e2e6ec;"></div>
<div class="a" style="left:759px;top:557px;width:1px;height:26px;background:#e2e6ec;"></div>
<div class="a" style="left:889px;top:557px;width:1px;height:26px;background:#e2e6ec;"></div>
<div class="a" style="left:436px;top:563px;width:17px;height:17px;border:2px solid #a9aeb4;background:#fbfbfb;"><div class="a" style="left:1px;top:1px;width:11px;height:11px;border:1px solid #c3c7cc;background:linear-gradient(135deg,#d2d4d8,#f7f7f7);"></div></div>
<div class="t" style="left:460px;top:564px;font-size:14px;line-height:16px;font-weight:normal;color:#111;letter-spacing:0px;">08</div>
<div class="t" style="left:511px;top:562px;font-size:14px;line-height:16px;font-weight:normal;color:#222;letter-spacing:-0.2px;">Grade Level 08</div>
<div class="t" style="left:522px;width:400px;text-align:center;top:562px;font-size:14px;line-height:16px;font-weight:normal;color:#222;letter-spacing:0px;">20</div>
<div class="t" style="left:765px;top:562px;font-size:14px;line-height:16px;font-weight:normal;color:#222;letter-spacing:0px;">Middle School</div>
<div class="a" style="left:430px;top:583px;width:515px;height:26px;background:#ffffff;"></div>
<div class="a" style="left:504px;top:583px;width:1px;height:26px;background:#ececec;"></div>
<div class="a" style="left:684px;top:583px;width:1px;height:26px;background:#ececec;"></div>
<div class="a" style="left:759px;top:583px;width:1px;height:26px;background:#ececec;"></div>
<div class="a" style="left:889px;top:583px;width:1px;height:26px;background:#ececec;"></div>
<div class="a" style="left:436px;top:589px;width:17px;height:17px;border:2px solid #a9aeb4;background:#fbfbfb;"><div class="a" style="left:1px;top:1px;width:11px;height:11px;border:1px solid #c3c7cc;background:linear-gradient(135deg,#d2d4d8,#f7f7f7);"></div></div>
<div class="t" style="left:460px;top:590px;font-size:14px;line-height:16px;font-weight:normal;color:#111;letter-spacing:0px;">09</div>
<div class="t" style="left:511px;top:588px;font-size:14px;line-height:16px;font-weight:normal;color:#222;letter-spacing:-0.2px;">Grade Level 09</div>
<div class="t" style="left:522px;width:400px;text-align:center;top:588px;font-size:14px;line-height:16px;font-weight:normal;color:#222;letter-spacing:0px;">17</div>
<div class="t" style="left:765px;top:588px;font-size:14px;line-height:16px;font-weight:normal;color:#222;letter-spacing:0px;">High School</div>
<div class="a" style="left:430px;top:609px;width:515px;height:26px;background:#dde6f5;"></div>
<div class="a" style="left:504px;top:609px;width:1px;height:26px;background:#e2e6ec;"></div>
<div class="a" style="left:684px;top:609px;width:1px;height:26px;background:#e2e6ec;"></div>
<div class="a" style="left:759px;top:609px;width:1px;height:26px;background:#e2e6ec;"></div>
<div class="a" style="left:889px;top:609px;width:1px;height:26px;background:#e2e6ec;"></div>
<div class="a" style="left:436px;top:615px;width:17px;height:17px;border:2px solid #a9aeb4;background:#fbfbfb;"><div class="a" style="left:1px;top:1px;width:11px;height:11px;border:1px solid #c3c7cc;background:linear-gradient(135deg,#d2d4d8,#f7f7f7);"></div></div>
<div class="t" style="left:460px;top:616px;font-size:14px;line-height:16px;font-weight:normal;color:#111;letter-spacing:0px;">10</div>
<div class="t" style="left:511px;top:614px;font-size:14px;line-height:16px;font-weight:normal;color:#222;letter-spacing:-0.2px;">Grade Level 10</div>
<div class="t" style="left:522px;width:400px;text-align:center;top:614px;font-size:14px;line-height:16px;font-weight:normal;color:#222;letter-spacing:0px;">20</div>
<div class="t" style="left:765px;top:614px;font-size:14px;line-height:16px;font-weight:normal;color:#222;letter-spacing:0px;">High School</div>
<div class="a" style="left:430px;top:635px;width:515px;height:26px;background:#ffffff;"></div>
<div class="a" style="left:504px;top:635px;width:1px;height:26px;background:#ececec;"></div>
<div class="a" style="left:684px;top:635px;width:1px;height:26px;background:#ececec;"></div>
<div class="a" style="left:759px;top:635px;width:1px;height:26px;background:#ececec;"></div>
<div class="a" style="left:889px;top:635px;width:1px;height:26px;background:#ececec;"></div>
<div class="a" style="left:436px;top:641px;width:17px;height:17px;border:2px solid #a9aeb4;background:#fbfbfb;"><div class="a" style="left:1px;top:1px;width:11px;height:11px;border:1px solid #c3c7cc;background:linear-gradient(135deg,#d2d4d8,#f7f7f7);"></div></div>
<div class="t" style="left:460px;top:642px;font-size:14px;line-height:16px;font-weight:normal;color:#111;letter-spacing:0px;">11</div>
<div class="t" style="left:511px;top:640px;font-size:14px;line-height:16px;font-weight:normal;color:#222;letter-spacing:-0.2px;">Grade Level 11</div>
<div class="t" style="left:522px;width:400px;text-align:center;top:640px;font-size:14px;line-height:16px;font-weight:normal;color:#222;letter-spacing:0px;">16</div>
<div class="t" style="left:765px;top:640px;font-size:14px;line-height:16px;font-weight:normal;color:#222;letter-spacing:0px;">High School</div>
<div class="a" style="left:430px;top:661px;width:515px;height:26px;background:#dde6f5;"></div>
<div class="a" style="left:504px;top:661px;width:1px;height:26px;background:#e2e6ec;"></div>
<div class="a" style="left:684px;top:661px;width:1px;height:26px;background:#e2e6ec;"></div>
<div class="a" style="left:759px;top:661px;width:1px;height:26px;background:#e2e6ec;"></div>
<div class="a" style="left:889px;top:661px;width:1px;height:26px;background:#e2e6ec;"></div>
<div class="a" style="left:436px;top:667px;width:17px;height:17px;border:2px solid #a9aeb4;background:#fbfbfb;"><div class="a" style="left:1px;top:1px;width:11px;height:11px;border:1px solid #c3c7cc;background:linear-gradient(135deg,#d2d4d8,#f7f7f7);"></div></div>
<div class="t" style="left:460px;top:668px;font-size:14px;line-height:16px;font-weight:normal;color:#111;letter-spacing:0px;">12</div>
<div class="t" style="left:511px;top:666px;font-size:14px;line-height:16px;font-weight:normal;color:#222;letter-spacing:-0.2px;">Grade Level 12</div>
<div class="t" style="left:522px;width:400px;text-align:center;top:666px;font-size:14px;line-height:16px;font-weight:normal;color:#222;letter-spacing:0px;">4</div>
<div class="t" style="left:765px;top:666px;font-size:14px;line-height:16px;font-weight:normal;color:#222;letter-spacing:0px;">High School</div>
<div class="t" style="left:1004px;top:291px;font-size:16px;line-height:20px;font-weight:bold;color:#111;letter-spacing:0.7px;-webkit-text-stroke:0.35px #111;">Total by School Levels :</div>
<div class="a" style="left:1004px;top:317px;width:279px;height:1px;background:#8a8a8a;"></div>
<div class="a" style="left:1004px;top:318px;width:279px;height:1px;background:#fbfbfb;"></div>
<div class="t" style="left:1004px;top:330px;font-size:16px;line-height:20px;font-weight:normal;color:#111;letter-spacing:-0.1px;">Preschool</div>
<div class="t" style="left:788px;width:400px;text-align:right;top:330px;font-size:16px;line-height:20px;font-weight:normal;color:#111;letter-spacing:0px;">3</div>
<div class="t" style="left:1004px;top:350px;font-size:16px;line-height:20px;font-weight:normal;color:#111;letter-spacing:-0.1px;">Elementary</div>
<div class="t" style="left:788px;width:400px;text-align:right;top:350px;font-size:16px;line-height:20px;font-weight:normal;color:#111;letter-spacing:0px;">34</div>
<div class="t" style="left:1004px;top:370px;font-size:16px;line-height:20px;font-weight:normal;color:#111;letter-spacing:-0.1px;">Middle School</div>
<div class="t" style="left:788px;width:400px;text-align:right;top:370px;font-size:16px;line-height:20px;font-weight:normal;color:#111;letter-spacing:0px;">76</div>
<div class="t" style="left:1004px;top:390px;font-size:16px;line-height:20px;font-weight:normal;color:#111;letter-spacing:-0.1px;">High School</div>
<div class="t" style="left:788px;width:400px;text-align:right;top:390px;font-size:16px;line-height:20px;font-weight:normal;color:#111;letter-spacing:0px;">57</div>
<div class="a" style="left:1155px;top:408px;width:33px;height:1px;background:#222;"></div>
<div class="t" style="left:1004px;top:410px;font-size:16px;line-height:20px;font-weight:bold;color:#111;letter-spacing:0.95px;-webkit-text-stroke:0.35px #111;">Total Enrollment</div>
<div class="t" style="left:1156px;top:410px;font-size:16px;line-height:20px;font-weight:bold;color:#111;letter-spacing:1.9px;-webkit-text-stroke:0.35px #111;">170</div>
<div class="t" style="left:1316px;top:291px;font-size:16px;line-height:20px;font-weight:bold;color:#111;letter-spacing:0.85px;-webkit-text-stroke:0.35px #111;">Total by Grade Levels :</div>
<div class="a" style="left:1316px;top:317px;width:279px;height:1px;background:#8a8a8a;"></div>
<div class="a" style="left:1316px;top:318px;width:279px;height:1px;background:#fbfbfb;"></div>
<div class="t" style="left:1316px;top:330px;font-size:16px;line-height:20px;font-weight:normal;color:#111;letter-spacing:0px;">K4</div>
<div class="t" style="left:1187.3px;width:400px;text-align:center;top:330px;font-size:16px;line-height:20px;font-weight:normal;color:#111;letter-spacing:0px;">3</div>
<div class="t" style="left:1316px;top:350px;font-size:16px;line-height:20px;font-weight:normal;color:#111;letter-spacing:0px;">K5</div>
<div class="t" style="left:1187.3px;width:400px;text-align:center;top:350px;font-size:16px;line-height:20px;font-weight:normal;color:#111;letter-spacing:0px;">1</div>
<div class="t" style="left:1316px;top:370px;font-size:16px;line-height:20px;font-weight:normal;color:#111;letter-spacing:0px;">01</div>
<div class="t" style="left:1187.3px;width:400px;text-align:center;top:370px;font-size:16px;line-height:20px;font-weight:normal;color:#111;letter-spacing:0px;">4</div>
<div class="t" style="left:1316px;top:390px;font-size:16px;line-height:20px;font-weight:normal;color:#111;letter-spacing:0px;">02</div>
<div class="t" style="left:1187.3px;width:400px;text-align:center;top:390px;font-size:16px;line-height:20px;font-weight:normal;color:#111;letter-spacing:0px;">5</div>
<div class="t" style="left:1316px;top:410px;font-size:16px;line-height:20px;font-weight:normal;color:#111;letter-spacing:0px;">03</div>
<div class="t" style="left:1187.3px;width:400px;text-align:center;top:410px;font-size:16px;line-height:20px;font-weight:normal;color:#111;letter-spacing:0px;">3</div>
<div class="t" style="left:1316px;top:430px;font-size:16px;line-height:20px;font-weight:normal;color:#111;letter-spacing:0px;">04</div>
<div class="t" style="left:1187.3px;width:400px;text-align:center;top:430px;font-size:16px;line-height:20px;font-weight:normal;color:#111;letter-spacing:0px;">2</div>
<div class="t" style="left:1316px;top:450px;font-size:16px;line-height:20px;font-weight:normal;color:#111;letter-spacing:0px;">05</div>
<div class="t" style="left:1187.3px;width:400px;text-align:center;top:450px;font-size:16px;line-height:20px;font-weight:normal;color:#111;letter-spacing:0px;">19</div>
<div class="t" style="left:1316px;top:470px;font-size:16px;line-height:20px;font-weight:normal;color:#111;letter-spacing:0px;">06</div>
<div class="t" style="left:1187.3px;width:400px;text-align:center;top:470px;font-size:16px;line-height:20px;font-weight:normal;color:#111;letter-spacing:0px;">38</div>
<div class="t" style="left:1316px;top:490px;font-size:16px;line-height:20px;font-weight:normal;color:#111;letter-spacing:0px;">07</div>
<div class="t" style="left:1187.3px;width:400px;text-align:center;top:490px;font-size:16px;line-height:20px;font-weight:normal;color:#111;letter-spacing:0px;">18</div>
<div class="t" style="left:1316px;top:510px;font-size:16px;line-height:20px;font-weight:normal;color:#111;letter-spacing:0px;">08</div>
<div class="t" style="left:1187.3px;width:400px;text-align:center;top:510px;font-size:16px;line-height:20px;font-weight:normal;color:#111;letter-spacing:0px;">20</div>
<div class="t" style="left:1316px;top:530px;font-size:16px;line-height:20px;font-weight:normal;color:#111;letter-spacing:0px;">09</div>
<div class="t" style="left:1187.3px;width:400px;text-align:center;top:530px;font-size:16px;line-height:20px;font-weight:normal;color:#111;letter-spacing:0px;">17</div>
<div class="t" style="left:1316px;top:550px;font-size:16px;line-height:20px;font-weight:normal;color:#111;letter-spacing:0px;">10</div>
<div class="t" style="left:1187.3px;width:400px;text-align:center;top:550px;font-size:16px;line-height:20px;font-weight:normal;color:#111;letter-spacing:0px;">20</div>
<div class="t" style="left:1316px;top:570px;font-size:16px;line-height:20px;font-weight:normal;color:#111;letter-spacing:0px;">11</div>
<div class="t" style="left:1187.3px;width:400px;text-align:center;top:570px;font-size:16px;line-height:20px;font-weight:normal;color:#111;letter-spacing:0px;">16</div>
<div class="t" style="left:1316px;top:590px;font-size:16px;line-height:20px;font-weight:normal;color:#111;letter-spacing:0px;">12</div>
<div class="t" style="left:1187.3px;width:400px;text-align:center;top:590px;font-size:16px;line-height:20px;font-weight:normal;color:#111;letter-spacing:0px;">4</div>
<div class="t" style="left:991px;top:610px;font-size:18px;line-height:22px;font-weight:bold;color:#111;letter-spacing:0.82px;-webkit-text-stroke:0.35px #111;">Menu of Reports:</div>
<div class="t" style="left:991px;top:651px;font-size:16px;line-height:20px;font-weight:normal;color:#111;letter-spacing:0px;">Click Report</div>
<div class="a" style="left:991px;top:669px;width:637px;height:340px;background:#fff;border-top:1px solid #a0a0a0;border-left:1px solid #a0a0a0;border-right:1px solid #6a6a6a;"></div>
<div class="a" style="left:994px;top:672px;width:257px;height:42px;background:#333333;"></div>
<div class="t" style="left:995.5px;top:685px;font-size:16px;line-height:20px;font-weight:bold;color:#ffffff;letter-spacing:0.55px;-webkit-text-stroke:0.35px #ffffff;">Report</div>
<div class="a" style="left:1253px;top:672px;width:97px;height:42px;background:#333333;"></div>
<div class="t" style="left:1254.5px;top:675px;font-size:16px;line-height:20px;font-weight:bold;color:#ffffff;letter-spacing:0.55px;-webkit-text-stroke:0.35px #ffffff;">Rosters</div>
<div class="t" style="left:1254.5px;top:695px;font-size:16px;line-height:20px;font-weight:bold;color:#ffffff;letter-spacing:0.55px;-webkit-text-stroke:0.35px #ffffff;">For:</div>
<div class="a" style="left:1352px;top:672px;width:91px;height:42px;background:#333333;"></div>
<div class="t" style="left:1353.5px;top:685px;font-size:16px;line-height:20px;font-weight:bold;color:#ffffff;letter-spacing:0.55px;-webkit-text-stroke:0.35px #ffffff;">Enrolled:</div>
<div class="a" style="left:1445px;top:672px;width:90px;height:42px;background:#333333;"></div>
<div class="t" style="left:1446.5px;top:685px;font-size:16px;line-height:20px;font-weight:bold;color:#ffffff;letter-spacing:0.55px;-webkit-text-stroke:0.35px #ffffff;">Summer:</div>
<div class="a" style="left:1537px;top:672px;width:88px;height:42px;background:#333333;"></div>
<div class="t" style="left:1538.5px;top:675px;font-size:16px;line-height:20px;font-weight:bold;color:#ffffff;letter-spacing:0.55px;-webkit-text-stroke:0.35px #ffffff;">Next</div>
<div class="t" style="left:1538.5px;top:695px;font-size:16px;line-height:20px;font-weight:bold;color:#ffffff;letter-spacing:0.55px;-webkit-text-stroke:0.35px #ffffff;">Year:</div>
<div class="a" style="left:994px;top:716px;width:257px;height:22px;background:#ffffff;border-top:1px solid #3a3a3a;border-left:1px solid #3a3a3a;border-right:1px solid #8c8c8c;border-bottom:1px solid #8c8c8c;"></div>
<div class="t" style="left:995px;top:719px;font-size:16px;line-height:20px;font-weight:normal;color:#363636;letter-spacing:0.3px;text-decoration:underline;">Currently Enrolled Students</div>
<div class="a" style="left:1253px;top:716px;width:97px;height:22px;background:#ffffff;border-top:1px solid #3a3a3a;border-left:1px solid #3a3a3a;border-right:1px solid #8c8c8c;border-bottom:1px solid #8c8c8c;"></div>
<div class="t" style="left:1254.5px;top:719px;font-size:16px;line-height:20px;font-weight:normal;color:#111;letter-spacing:0.1px;">Enrolled</div>
<div class="a" style="left:1352px;top:716px;width:91px;height:22px;background:#ffffff;border-top:1px solid #3a3a3a;border-left:1px solid #3a3a3a;border-right:1px solid #8c8c8c;border-bottom:1px solid #8c8c8c;"></div>
<div class="t" style="left:1353.5px;top:719px;font-size:16px;line-height:20px;font-weight:normal;color:#111;letter-spacing:0.1px;">Enrolled</div>
<div class="a" style="left:1445px;top:716px;width:90px;height:22px;background:#ffffff;border-top:1px solid #3a3a3a;border-left:1px solid #3a3a3a;border-right:1px solid #8c8c8c;border-bottom:1px solid #8c8c8c;"></div>
<div class="t" style="left:1446.5px;top:719px;font-size:16px;line-height:20px;font-weight:normal;color:#111;letter-spacing:0.1px;">N/A</div>
<div class="a" style="left:1537px;top:716px;width:88px;height:22px;background:#ffffff;border-top:1px solid #3a3a3a;border-left:1px solid #3a3a3a;border-right:1px solid #8c8c8c;border-bottom:1px solid #8c8c8c;"></div>
<div class="t" style="left:1538.5px;top:719px;font-size:16px;line-height:20px;font-weight:normal;color:#111;letter-spacing:0.1px;">N/A</div>
<div class="a" style="left:994px;top:740px;width:257px;height:22px;background:#dde6f5;border-top:1px solid #3a3a3a;border-left:1px solid #3a3a3a;border-right:1px solid #8c8c8c;border-bottom:1px solid #8c8c8c;"></div>
<div class="t" style="left:995px;top:743px;font-size:16px;line-height:20px;font-weight:normal;color:#363636;letter-spacing:0.3px;text-decoration:underline;">All PreRegistered Students</div>
<div class="a" style="left:1253px;top:740px;width:97px;height:22px;background:#dde6f5;border-top:1px solid #3a3a3a;border-left:1px solid #3a3a3a;border-right:1px solid #8c8c8c;border-bottom:1px solid #8c8c8c;"></div>
<div class="t" style="left:1254.5px;top:743px;font-size:16px;line-height:20px;font-weight:normal;color:#111;letter-spacing:0.1px;">Next Year</div>
<div class="a" style="left:1352px;top:740px;width:91px;height:22px;background:#dde6f5;border-top:1px solid #3a3a3a;border-left:1px solid #3a3a3a;border-right:1px solid #8c8c8c;border-bottom:1px solid #8c8c8c;"></div>
<div class="t" style="left:1353.5px;top:743px;font-size:16px;line-height:20px;font-weight:normal;color:#111;letter-spacing:0.1px;">N/A</div>
<div class="a" style="left:1445px;top:740px;width:90px;height:22px;background:#dde6f5;border-top:1px solid #3a3a3a;border-left:1px solid #3a3a3a;border-right:1px solid #8c8c8c;border-bottom:1px solid #8c8c8c;"></div>
<div class="t" style="left:1446.5px;top:743px;font-size:16px;line-height:20px;font-weight:normal;color:#111;letter-spacing:0.1px;">N/A</div>
<div class="a" style="left:1537px;top:740px;width:88px;height:22px;background:#dde6f5;border-top:1px solid #3a3a3a;border-left:1px solid #3a3a3a;border-right:1px solid #8c8c8c;border-bottom:1px solid #8c8c8c;"></div>
<div class="t" style="left:1538.5px;top:743px;font-size:16px;line-height:20px;font-weight:normal;color:#111;letter-spacing:0.1px;">Enrolled</div>
<div class="a" style="left:994px;top:764px;width:257px;height:42px;background:#ffffff;border-top:1px solid #3a3a3a;border-left:1px solid #3a3a3a;border-right:1px solid #8c8c8c;border-bottom:1px solid #8c8c8c;"></div>
<div class="t" style="left:995px;top:777px;font-size:16px;line-height:20px;font-weight:normal;color:#363636;letter-spacing:0.3px;text-decoration:underline;">New PreRegistered Students</div>
<div class="a" style="left:1253px;top:764px;width:97px;height:42px;background:#ffffff;border-top:1px solid #3a3a3a;border-left:1px solid #3a3a3a;border-right:1px solid #8c8c8c;border-bottom:1px solid #8c8c8c;"></div>
<div class="t" style="left:1254.5px;top:777px;font-size:16px;line-height:20px;font-weight:normal;color:#111;letter-spacing:0.1px;">Next Year</div>
<div class="a" style="left:1352px;top:764px;width:91px;height:42px;background:#ffffff;border-top:1px solid #3a3a3a;border-left:1px solid #3a3a3a;border-right:1px solid #8c8c8c;border-bottom:1px solid #8c8c8c;"></div>
<div class="t" style="left:1353.5px;top:767px;font-size:16px;line-height:20px;font-weight:normal;color:#111;letter-spacing:0.1px;">Not</div>
<div class="t" style="left:1353.5px;top:787px;font-size:16px;line-height:20px;font-weight:normal;color:#111;letter-spacing:0.1px;">Enrolled</div>
<div class="a" style="left:1445px;top:764px;width:90px;height:42px;background:#ffffff;border-top:1px solid #3a3a3a;border-left:1px solid #3a3a3a;border-right:1px solid #8c8c8c;border-bottom:1px solid #8c8c8c;"></div>
<div class="t" style="left:1446.5px;top:777px;font-size:16px;line-height:20px;font-weight:normal;color:#111;letter-spacing:0.1px;">N/A</div>
<div class="a" style="left:1537px;top:764px;width:88px;height:42px;background:#ffffff;border-top:1px solid #3a3a3a;border-left:1px solid #3a3a3a;border-right:1px solid #8c8c8c;border-bottom:1px solid #8c8c8c;"></div>
<div class="t" style="left:1538.5px;top:777px;font-size:16px;line-height:20px;font-weight:normal;color:#111;letter-spacing:0.1px;">Enrolled</div>
<div class="a" style="left:994px;top:808px;width:257px;height:22px;background:#dde6f5;border-top:1px solid #3a3a3a;border-left:1px solid #3a3a3a;border-right:1px solid #8c8c8c;border-bottom:1px solid #8c8c8c;"></div>
<div class="t" style="left:995px;top:811px;font-size:16px;line-height:20px;font-weight:normal;color:#363636;letter-spacing:0.3px;text-decoration:underline;">Existing PreRegistered Students</div>
<div class="a" style="left:1253px;top:808px;width:97px;height:22px;background:#dde6f5;border-top:1px solid #3a3a3a;border-left:1px solid #3a3a3a;border-right:1px solid #8c8c8c;border-bottom:1px solid #8c8c8c;"></div>
<div class="t" style="left:1254.5px;top:811px;font-size:16px;line-height:20px;font-weight:normal;color:#111;letter-spacing:0.1px;">Next Year</div>
<div class="a" style="left:1352px;top:808px;width:91px;height:22px;background:#dde6f5;border-top:1px solid #3a3a3a;border-left:1px solid #3a3a3a;border-right:1px solid #8c8c8c;border-bottom:1px solid #8c8c8c;"></div>
<div class="t" style="left:1353.5px;top:811px;font-size:16px;line-height:20px;font-weight:normal;color:#111;letter-spacing:0.1px;">Enrolled</div>
<div class="a" style="left:1445px;top:808px;width:90px;height:22px;background:#dde6f5;border-top:1px solid #3a3a3a;border-left:1px solid #3a3a3a;border-right:1px solid #8c8c8c;border-bottom:1px solid #8c8c8c;"></div>
<div class="t" style="left:1446.5px;top:811px;font-size:16px;line-height:20px;font-weight:normal;color:#111;letter-spacing:0.1px;">N/A</div>
<div class="a" style="left:1537px;top:808px;width:88px;height:22px;background:#dde6f5;border-top:1px solid #3a3a3a;border-left:1px solid #3a3a3a;border-right:1px solid #8c8c8c;border-bottom:1px solid #8c8c8c;"></div>
<div class="t" style="left:1538.5px;top:811px;font-size:16px;line-height:20px;font-weight:normal;color:#111;letter-spacing:0.1px;">Enrolled</div>
<div class="a" style="left:994px;top:832px;width:257px;height:42px;background:#ffffff;border-top:1px solid #3a3a3a;border-left:1px solid #3a3a3a;border-right:1px solid #8c8c8c;border-bottom:1px solid #8c8c8c;"></div>
<div class="t" style="left:995px;top:835px;font-size:16px;line-height:20px;font-weight:normal;color:#363636;letter-spacing:0.3px;text-decoration:underline;">Existing Students Not</div>
<div class="t" style="left:995px;top:855px;font-size:16px;line-height:20px;font-weight:normal;color:#363636;letter-spacing:0.3px;text-decoration:underline;">PreRegistered</div>
<div class="a" style="left:1253px;top:832px;width:97px;height:42px;background:#ffffff;border-top:1px solid #3a3a3a;border-left:1px solid #3a3a3a;border-right:1px solid #8c8c8c;border-bottom:1px solid #8c8c8c;"></div>
<div class="t" style="left:1254.5px;top:845px;font-size:16px;line-height:20px;font-weight:normal;color:#111;letter-spacing:0.1px;">Next Year</div>
<div class="a" style="left:1352px;top:832px;width:91px;height:42px;background:#ffffff;border-top:1px solid #3a3a3a;border-left:1px solid #3a3a3a;border-right:1px solid #8c8c8c;border-bottom:1px solid #8c8c8c;"></div>
<div class="t" style="left:1353.5px;top:845px;font-size:16px;line-height:20px;font-weight:normal;color:#111;letter-spacing:0.1px;">Enrolled</div>
<div class="a" style="left:1445px;top:832px;width:90px;height:42px;background:#ffffff;border-top:1px solid #3a3a3a;border-left:1px solid #3a3a3a;border-right:1px solid #8c8c8c;border-bottom:1px solid #8c8c8c;"></div>
<div class="t" style="left:1446.5px;top:845px;font-size:16px;line-height:20px;font-weight:normal;color:#111;letter-spacing:0.1px;">N/A</div>
<div class="a" style="left:1537px;top:832px;width:88px;height:42px;background:#ffffff;border-top:1px solid #3a3a3a;border-left:1px solid #3a3a3a;border-right:1px solid #8c8c8c;border-bottom:1px solid #8c8c8c;"></div>
<div class="t" style="left:1538.5px;top:835px;font-size:16px;line-height:20px;font-weight:normal;color:#111;letter-spacing:0.1px;">Not</div>
<div class="t" style="left:1538.5px;top:855px;font-size:16px;line-height:20px;font-weight:normal;color:#111;letter-spacing:0.1px;">Enrolled</div>
<div class="a" style="left:994px;top:876px;width:257px;height:22px;background:#dde6f5;border-top:1px solid #3a3a3a;border-left:1px solid #3a3a3a;border-right:1px solid #8c8c8c;border-bottom:1px solid #8c8c8c;"></div>
<div class="t" style="left:995px;top:879px;font-size:16px;line-height:20px;font-weight:normal;color:#363636;letter-spacing:0.3px;text-decoration:underline;">All Summer Students</div>
<div class="a" style="left:1253px;top:876px;width:97px;height:22px;background:#dde6f5;border-top:1px solid #3a3a3a;border-left:1px solid #3a3a3a;border-right:1px solid #8c8c8c;border-bottom:1px solid #8c8c8c;"></div>
<div class="t" style="left:1254.5px;top:879px;font-size:16px;line-height:20px;font-weight:normal;color:#111;letter-spacing:0.1px;">Summer</div>
<div class="a" style="left:1352px;top:876px;width:91px;height:22px;background:#dde6f5;border-top:1px solid #3a3a3a;border-left:1px solid #3a3a3a;border-right:1px solid #8c8c8c;border-bottom:1px solid #8c8c8c;"></div>
<div class="t" style="left:1353.5px;top:879px;font-size:16px;line-height:20px;font-weight:normal;color:#111;letter-spacing:0.1px;">N/A</div>
<div class="a" style="left:1445px;top:876px;width:90px;height:22px;background:#dde6f5;border-top:1px solid #3a3a3a;border-left:1px solid #3a3a3a;border-right:1px solid #8c8c8c;border-bottom:1px solid #8c8c8c;"></div>
<div class="t" style="left:1446.5px;top:879px;font-size:16px;line-height:20px;font-weight:normal;color:#111;letter-spacing:0.1px;">Enrolled</div>
<div class="a" style="left:1537px;top:876px;width:88px;height:22px;background:#dde6f5;border-top:1px solid #3a3a3a;border-left:1px solid #3a3a3a;border-right:1px solid #8c8c8c;border-bottom:1px solid #8c8c8c;"></div>
<div class="t" style="left:1538.5px;top:879px;font-size:16px;line-height:20px;font-weight:normal;color:#111;letter-spacing:0.1px;">N/A</div>
<div class="a" style="left:994px;top:900px;width:257px;height:42px;background:#ffffff;border-top:1px solid #3a3a3a;border-left:1px solid #3a3a3a;border-right:1px solid #8c8c8c;border-bottom:1px solid #8c8c8c;"></div>
<div class="t" style="left:995px;top:913px;font-size:16px;line-height:20px;font-weight:normal;color:#363636;letter-spacing:0.3px;text-decoration:underline;">New Summer Students</div>
<div class="a" style="left:1253px;top:900px;width:97px;height:42px;background:#ffffff;border-top:1px solid #3a3a3a;border-left:1px solid #3a3a3a;border-right:1px solid #8c8c8c;border-bottom:1px solid #8c8c8c;"></div>
<div class="t" style="left:1254.5px;top:913px;font-size:16px;line-height:20px;font-weight:normal;color:#111;letter-spacing:0.1px;">Summer</div>
<div class="a" style="left:1352px;top:900px;width:91px;height:42px;background:#ffffff;border-top:1px solid #3a3a3a;border-left:1px solid #3a3a3a;border-right:1px solid #8c8c8c;border-bottom:1px solid #8c8c8c;"></div>
<div class="t" style="left:1353.5px;top:903px;font-size:16px;line-height:20px;font-weight:normal;color:#111;letter-spacing:0.1px;">Not</div>
<div class="t" style="left:1353.5px;top:923px;font-size:16px;line-height:20px;font-weight:normal;color:#111;letter-spacing:0.1px;">Enrolled</div>
<div class="a" style="left:1445px;top:900px;width:90px;height:42px;background:#ffffff;border-top:1px solid #3a3a3a;border-left:1px solid #3a3a3a;border-right:1px solid #8c8c8c;border-bottom:1px solid #8c8c8c;"></div>
<div class="t" style="left:1446.5px;top:913px;font-size:16px;line-height:20px;font-weight:normal;color:#111;letter-spacing:0.1px;">Enrolled</div>
<div class="a" style="left:1537px;top:900px;width:88px;height:42px;background:#ffffff;border-top:1px solid #3a3a3a;border-left:1px solid #3a3a3a;border-right:1px solid #8c8c8c;border-bottom:1px solid #8c8c8c;"></div>
<div class="t" style="left:1538.5px;top:913px;font-size:16px;line-height:20px;font-weight:normal;color:#111;letter-spacing:0.1px;">N/A</div>
<div class="a" style="left:994px;top:944px;width:257px;height:22px;background:#dde6f5;border-top:1px solid #3a3a3a;border-left:1px solid #3a3a3a;border-right:1px solid #8c8c8c;border-bottom:1px solid #8c8c8c;"></div>
<div class="t" style="left:995px;top:947px;font-size:16px;line-height:20px;font-weight:normal;color:#363636;letter-spacing:0.3px;text-decoration:underline;">Existing Summer Students</div>
<div class="a" style="left:1253px;top:944px;width:97px;height:22px;background:#dde6f5;border-top:1px solid #3a3a3a;border-left:1px solid #3a3a3a;border-right:1px solid #8c8c8c;border-bottom:1px solid #8c8c8c;"></div>
<div class="t" style="left:1254.5px;top:947px;font-size:16px;line-height:20px;font-weight:normal;color:#111;letter-spacing:0.1px;">Summer</div>
<div class="a" style="left:1352px;top:944px;width:91px;height:22px;background:#dde6f5;border-top:1px solid #3a3a3a;border-left:1px solid #3a3a3a;border-right:1px solid #8c8c8c;border-bottom:1px solid #8c8c8c;"></div>
<div class="t" style="left:1353.5px;top:947px;font-size:16px;line-height:20px;font-weight:normal;color:#111;letter-spacing:0.1px;">Enrolled</div>
<div class="a" style="left:1445px;top:944px;width:90px;height:22px;background:#dde6f5;border-top:1px solid #3a3a3a;border-left:1px solid #3a3a3a;border-right:1px solid #8c8c8c;border-bottom:1px solid #8c8c8c;"></div>
<div class="t" style="left:1446.5px;top:947px;font-size:16px;line-height:20px;font-weight:normal;color:#111;letter-spacing:0.1px;">Enrolled</div>
<div class="a" style="left:1537px;top:944px;width:88px;height:22px;background:#dde6f5;border-top:1px solid #3a3a3a;border-left:1px solid #3a3a3a;border-right:1px solid #8c8c8c;border-bottom:1px solid #8c8c8c;"></div>
<div class="t" style="left:1538.5px;top:947px;font-size:16px;line-height:20px;font-weight:normal;color:#111;letter-spacing:0.1px;">N/A</div>
<div class="a" style="left:994px;top:968px;width:257px;height:42px;background:#ffffff;border-top:1px solid #3a3a3a;border-left:1px solid #3a3a3a;border-right:1px solid #8c8c8c;border-bottom:1px solid #8c8c8c;"></div>
<div class="t" style="left:995px;top:981px;font-size:16px;line-height:20px;font-weight:normal;color:#363636;letter-spacing:0.3px;text-decoration:underline;">New Summer Students</div>
<div class="a" style="left:1253px;top:968px;width:97px;height:42px;background:#ffffff;border-top:1px solid #3a3a3a;border-left:1px solid #3a3a3a;border-right:1px solid #8c8c8c;border-bottom:1px solid #8c8c8c;"></div>
<div class="t" style="left:1254.5px;top:981px;font-size:16px;line-height:20px;font-weight:normal;color:#111;letter-spacing:0.1px;">Summer</div>
<div class="a" style="left:1352px;top:968px;width:91px;height:42px;background:#ffffff;border-top:1px solid #3a3a3a;border-left:1px solid #3a3a3a;border-right:1px solid #8c8c8c;border-bottom:1px solid #8c8c8c;"></div>
<div class="t" style="left:1353.5px;top:971px;font-size:16px;line-height:20px;font-weight:normal;color:#111;letter-spacing:0.1px;">Not</div>
<div class="t" style="left:1353.5px;top:991px;font-size:16px;line-height:20px;font-weight:normal;color:#111;letter-spacing:0.1px;">Enrolled</div>
<div class="a" style="left:1445px;top:968px;width:90px;height:42px;background:#ffffff;border-top:1px solid #3a3a3a;border-left:1px solid #3a3a3a;border-right:1px solid #8c8c8c;border-bottom:1px solid #8c8c8c;"></div>
<div class="t" style="left:1446.5px;top:981px;font-size:16px;line-height:20px;font-weight:normal;color:#111;letter-spacing:0.1px;">Enrolled</div>
<div class="a" style="left:1537px;top:968px;width:88px;height:42px;background:#ffffff;border-top:1px solid #3a3a3a;border-left:1px solid #3a3a3a;border-right:1px solid #8c8c8c;border-bottom:1px solid #8c8c8c;"></div>
<div class="t" style="left:1538.5px;top:981px;font-size:16px;line-height:20px;font-weight:normal;color:#111;letter-spacing:0.1px;">N/A</div>
<div class="a" style="left:403.5px;top:205px;width:140px;height:139px;border-radius:50%;border:7px solid #f7903a;background:rgba(245,140,55,0.42);"></div>
</body></html>
